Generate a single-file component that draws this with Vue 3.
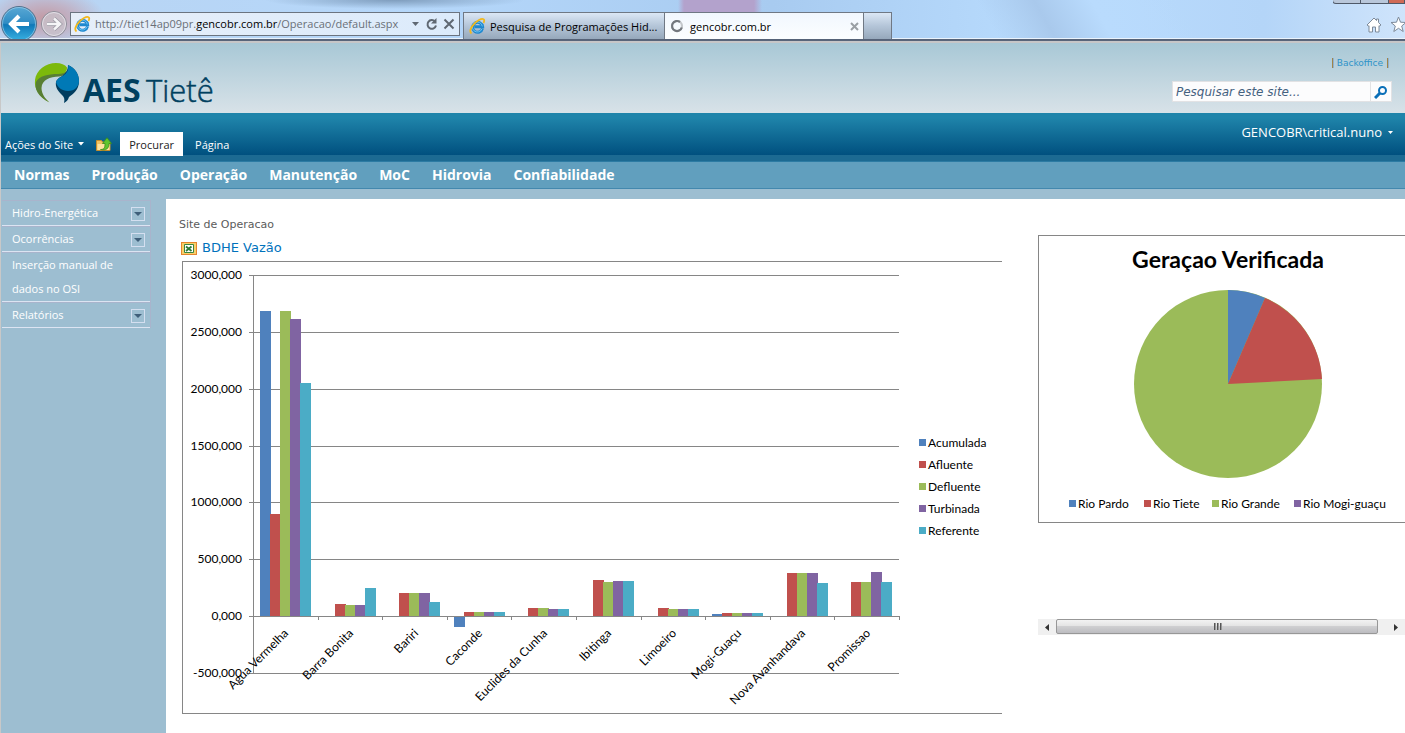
<script setup>
const colours = ['#4f81bd', '#c0504d', '#9bbb59', '#8064a2', '#4bacc6']
const series = ['Acumulada', 'Afluente', 'Defluente', 'Turbinada', 'Referente']

const plot = { left: 70, right: 716, top: 13, zero: 354, bottom: 411 }
const perUnit = (plot.zero - plot.top) / 3000
const step = (plot.right - plot.left) / 10

const plants = [
  { name: 'Agua Vermelha', values: [2685, 897, 2685, 2612, 2050] },
  { name: 'Barra Bonita', values: [0, 106, 97, 97, 246] },
  { name: 'Bariri', values: [0, 202, 202, 202, 123] },
  { name: 'Caconde', values: [-95, 35, 35, 35, 35] },
  { name: 'Euclides da Cunha', values: [0, 70, 70, 62, 62] },
  { name: 'Ibitinga', values: [0, 317, 299, 308, 308] },
  { name: 'Limoeiro', values: [0, 70, 62, 62, 62] },
  { name: 'Mogi-Guaçu', values: [18, 26, 26, 26, 26] },
  { name: 'Nova Avanhandava', values: [0, 378, 378, 378, 290] },
  { name: 'Promissao', values: [0, 299, 299, 387, 299] }
]

const gridlines = [3000, 2500, 2000, 1500, 1000, 500, 0, -500].map((v) => ({
  y: Math.round(plot.zero - v * perUnit),
  label: v === 0 ? '0,000' : `${v},000`
}))

const ticks = Array.from({ length: 11 }, (_, i) => Math.round(plot.left + step * i))

const bars = plants.flatMap((plant, i) =>
  plant.values.map((v, j) => {
    const height = Math.round(Math.abs(v) * perUnit)
    return {
      x: Math.round(plot.left + step * i + 7 + 10 * j),
      y: v < 0 ? plot.zero : plot.zero - height,
      height,
      fill: colours[j]
    }
  })
)

const labels = plants.map((plant, i) => ({
  name: plant.name,
  x: Math.round(plot.left + step * (i + 0.5) + 4),
  y: plot.zero + 18
}))

const rivers = [
  { name: 'Rio Pardo', x: 31 },
  { name: 'Rio Tiete', x: 106 },
  { name: 'Rio Grande', x: 174 },
  { name: 'Rio Mogi-guaçu', x: 256 }
]

const menu = ['Normas', 'Produção', 'Operação', 'Manutenção', 'MoC', 'Hidrovia', 'Confiabilidade']
const side = [
  { name: 'Hidro-Energética', more: true },
  { name: 'Ocorrências', more: true },
  { name: 'Inserção manual de dados no OSI', more: false },
  { name: 'Relatórios', more: true }
]
</script>

<template>
  <div class="window">
    <header class="chrome">
      <button class="back" aria-label="Voltar">
        <svg width="38" height="39" viewBox="0 0 38 39">
          <defs>
            <linearGradient id="backFill" x1="0" y1="0" x2="0" y2="1">
              <stop offset="0" stop-color="#5aa8d4" />
              <stop offset="0.48" stop-color="#2f8cc4" />
              <stop offset="0.52" stop-color="#0f78b8" />
              <stop offset="1" stop-color="#3cb4e4" />
            </linearGradient>
          </defs>
          <circle cx="19" cy="24" r="17.5" fill="url(#backFill)" stroke="#54718c" />
          <circle cx="19" cy="24" r="16.5" fill="none" stroke="#a9d3ec" stroke-opacity="0.6" />
          <path d="M29 24H12M19 16l-8 8 8 8" fill="none" stroke="#fff" stroke-width="4" />
        </svg>
      </button>
      <button class="forward" aria-label="Avançar">
        <svg width="28" height="28" viewBox="0 0 28 28">
          <circle cx="14" cy="14" r="12.5" fill="#c8c2cb" fill-opacity="0.8" stroke="#8d8d99" />
          <circle cx="14" cy="14" r="11.5" fill="none" stroke="#e2dfe6" />
          <path d="M7 14h12M14 8.500l6 5.500-6 5.500" fill="none" stroke="#9a98a3" stroke-width="4" />
          <path d="M7 14h12M14 8.500l6 5.500-6 5.500" fill="none" stroke="#f5f5f7" stroke-width="2.500" />
        </svg>
      </button>
      <div class="address">
        <svg class="ie" width="17" height="17" viewBox="0 0 17 17">
          <path d="M13.500 10.500A5 5 0 1 1 13.600 8.700H5.500" fill="none" stroke="#1e88cf" stroke-width="3" />
          <path d="M13 10.800A5 5 0 1 1 13.300 8.400" fill="none" stroke="#6cc4f2" stroke-width="1" />
          <path d="M2.500 15.500C-1 13 4 5 10 2c4-2 6.500-1 4.500 3" fill="none" stroke="#f2b81c" stroke-width="1.800" />
        </svg>
        <div class="url" role="textbox" aria-label="Endereço" contenteditable="true">http://tiet14ap09pr.<b>gencobr.com.br</b>/Operacao/default.aspx</div>
        <button aria-label="Mostrar endereços"><svg width="9" height="5" viewBox="0 0 9 5"><path d="M1 0h7L4.500 4z" fill="#5f6872" /></svg></button>
        <button aria-label="Atualizar">
          <svg width="13" height="13" viewBox="0 0 13 13">
            <path d="M10 3.500A4.300 4.300 0 1 0 11 7.500" fill="none" stroke="#5f6872" stroke-width="2" />
            <path d="M11.500 0v5.500H6z" fill="#5f6872" />
          </svg>
        </button>
        <button aria-label="Parar">
          <svg width="12" height="12" viewBox="0 0 12 12"><path d="M1.500 1.500l9 9M10.500 1.500l-9 9" stroke="#5f6872" stroke-width="2" /></svg>
        </button>
      </div>
      <div class="tabs">
        <button class="tab">
          <svg class="ie" width="17" height="17" viewBox="0 0 17 17">
            <path d="M13.500 10.500A5 5 0 1 1 13.600 8.700H5.500" fill="none" stroke="#1e88cf" stroke-width="3" />
            <path d="M13 10.800A5 5 0 1 1 13.300 8.400" fill="none" stroke="#6cc4f2" stroke-width="1" />
            <path d="M2.500 15.500C-1 13 4 5 10 2c4-2 6.500-1 4.500 3" fill="none" stroke="#f2b81c" stroke-width="1.800" />
          </svg>
          <span>Pesquisa de Programações Hid...</span>
        </button>
        <button class="tab active">
          <svg width="14" height="14" viewBox="0 0 14 14">
            <circle cx="7" cy="7" r="5" fill="none" stroke="#c4c8cc" stroke-width="2.200" />
            <path d="M8.500 2.200A5 5 0 1 1 3 4" transform="rotate(90 7 7)" fill="none" stroke="#73787e" stroke-width="2.200" />
          </svg>
          <span>gencobr.com.br</span>
          <svg class="close" width="9" height="9" viewBox="0 0 9 9"><path d="M1 1l7 7M8 1l-7 7" stroke="#9a9fa4" stroke-width="2" /></svg>
        </button>
        <button class="tab blank" aria-label="Nova guia"></button>
      </div>
      <div class="controls">
        <div class="frame"><i></i><i></i><i class="red"></i></div>
        <div class="tools">
          <button aria-label="Página inicial">
            <svg width="16" height="16" viewBox="0 0 16 16">
              <path d="M8 1L1 8l1.500 1L3 8.700V15h3.500v-5h3v5H13V8.700l.5.300L15 8l-2.500-2.500V2h-2v1.500z" fill="#fff" stroke="#7d8a99" />
            </svg>
          </button>
          <button aria-label="Favoritos">
            <svg width="17" height="17" viewBox="0 0 17 17">
              <path d="M8.500 1l2 5.200 5.500.3-4.300 3.500 1.500 5.500-4.700-3.200-4.700 3.200L5.300 10 1 6.500l5.500-.3z" fill="#fff" stroke="#7d8a99" />
            </svg>
          </button>
        </div>
      </div>
    </header>

    <div class="page">
      <div class="banner">
        <svg class="logo" width="192" height="52" viewBox="0 0 192 52">
          <path d="M15.500 41.500C5 36 0 28 1 19 2 9 12 2 22 2c5 0 9 1.500 11 4.500 0 4-2 6.500-8 7.500-10 0-19 4-18 14 0 6 4 10 8.500 13.500z" fill="#7cb90a" />
          <path d="M15.500 41.500C4 36 0 27 2 21c3-6 12-8 22-8 4 0 7-1 9-3-1 3-3 5-8 5.500-9 .5-17 3-17.500 11.500 0 6 4 11 8 14.500z" fill="#587f33" />
          <path d="M34 4c7 3 11 9 11 16 0 9-6 13-10 16-1 3-2 4.500-5 6 1-4 0-6-2-8-4-4-7-8-6-13 2-6 12-6 12-17z" fill="#003d5f" />
          <path d="M34 4c7 3 11 9 11 16 0 5-4 10-11 10-6 0-11-4-12-9 2-6 14-6 12-17z" fill="#0079b6" />
          <text x="49" y="41" class="aes">AES</text>
          <text x="112" y="41" class="tiete">Tietê</text>
        </svg>
        <div class="corner">
          <p class="backoffice"><i></i><a href="#">Backoffice</a><i></i></p>
          <form class="search" @submit.prevent>
            <input type="text" aria-label="Pesquisar este site" placeholder="Pesquisar este site..." />
            <button aria-label="Pesquisar">
              <svg width="14" height="14" viewBox="0 0 14 14">
                <circle cx="8.500" cy="5.500" r="3.500" fill="none" stroke="#0a6fb8" stroke-width="2" />
                <path d="M6 8l-5 5" stroke="#0a6fb8" stroke-width="3" />
              </svg>
            </button>
          </form>
        </div>
      </div>

      <div class="ribbon">
        <button class="actions">Ações do Site <svg width="6" height="4" viewBox="0 0 6 4"><path d="M0 0h6L3 3.500z" fill="#fff" /></svg></button>
        <button class="up" aria-label="Navegar para cima">
          <svg width="16" height="15" viewBox="0 0 16 15">
            <path d="M.5 3.500h5l1 1.500H14v8.500H.5z" fill="#f0c362" stroke="#c58d2c" />
            <path d="M1.500 7h12v6h-12z" fill="#fbe3a0" />
            <path d="M4.500 12.500c4 0 4.500-2 4.500-6H6.500L11 .7l4.500 5.800H13c0 5-3 7.500-8.500 6z" fill="#5fc52e" stroke="#3b8c1c" stroke-width="0.800" />
          </svg>
        </button>
        <button class="ribbon-tab chosen">Procurar</button>
        <button class="ribbon-tab">Página</button>
        <button class="user">GENCOBR\critical.nuno <svg width="5" height="3" viewBox="0 0 5 3"><path d="M0 0h5L2.500 3z" fill="#fff" /></svg></button>
      </div>

      <nav class="menu">
        <a v-for="item in menu" :key="item" href="#">{{ item }}</a>
      </nav>

      <div class="body">
        <aside>
          <ul>
            <li v-for="item in side" :key="item.name">
              <a href="#">{{ item.name }}</a>
              <button v-if="item.more" :aria-label="'Abrir ' + item.name">
                <svg width="8" height="4" viewBox="0 0 8 4"><path d="M0 0h8L4 4z" fill="#3f5f7a" /></svg>
              </button>
            </li>
          </ul>
        </aside>
        <main>
          <section class="flow">
            <p class="crumb">Site de Operacao</p>
            <h2>
              <svg width="16" height="13" viewBox="0 0 16 13">
                <path d="M0 0h16v13H0z" fill="#e5862d" />
                <path d="M1 1h14v11H1z" fill="#f8cf69" />
                <path d="M3.500 2.500h9v8h-9z" fill="#fff" stroke="#398541" />
                <path d="M5 4.500l5.500 4.500M10.500 4.500L5 9" stroke="#2c7a35" stroke-width="1.800" />
              </svg>
              <a href="#">BDHE Vazão</a>
            </h2>
            <div class="chart">
              <svg width="820" height="451" viewBox="0 0 820 451" role="img" aria-label="BDHE Vazão">
                <g class="lines">
                  <path v-for="g in gridlines" :key="g.y" :d="`M66 ${g.y}.5H${plot.right}`" />
                  <path :d="`M${plot.left}.5 ${plot.top}V${plot.bottom}`" />
                </g>
                <rect v-for="(b, i) in bars" :key="i" :x="b.x" :y="b.y" width="11" :height="b.height" :fill="b.fill" />
                <g class="lines">
                  <path :d="`M66 ${plot.zero}.5H${plot.right}`" />
                  <path v-for="t in ticks" :key="t" :d="`M${t}.5 ${plot.zero}v4`" />
                </g>
                <text v-for="g in gridlines" :key="g.label" class="value" x="59" :y="g.y + 4">{{ g.label }}</text>
                <text v-for="l in labels" :key="l.name" class="name" :transform="`translate(${l.x} ${l.y}) rotate(-45)`">{{ l.name }}</text>
                <g v-for="(s, i) in series" :key="s">
                  <rect x="736" :y="177 + 22 * i" width="7" height="7" :fill="colours[i]" />
                  <text x="745" :y="185 + 22 * i">{{ s }}</text>
                </g>
              </svg>
            </div>
          </section>
          <section class="output">
            <div class="pie">
              <svg width="380" height="286" viewBox="0 0 380 286" role="img" aria-label="Geraçao Verificada">
                <text x="189" y="32" class="title">Geraçao Verificada</text>
                <circle cx="189" cy="148" r="94" fill="#9bbb59" />
                <path d="M189 148V54A94 94 0 0 1 226 62z" fill="#4f81bd" />
                <path d="M189 148L226 62A94 94 0 0 1 283 143z" fill="#c0504d" />
                <g v-for="(r, i) in rivers" :key="r.name">
                  <rect :x="r.x - 1" y="264" width="7" height="7" :fill="colours[i]" />
                  <text :x="r.x + 8" y="272">{{ r.name }}</text>
                </g>
              </svg>
            </div>
            <div class="scroll">
              <button aria-label="Rolar para a esquerda"><svg width="4" height="7" viewBox="0 0 4 7"><path d="M4 0v7L0 3.500z" fill="#333" /></svg></button>
              <div class="track"><div class="thumb"><i></i><i></i><i></i></div></div>
              <button aria-label="Rolar para a direita"><svg width="4" height="7" viewBox="0 0 4 7"><path d="M0 0v7l4-3.500z" fill="#333" /></svg></button>
            </div>
          </section>
        </main>
      </div>
    </div>
  </div>
</template>

<style>
body {
  background: #9dbed1;
  overflow: hidden;
}
</style>

<style scoped>
.window {
  display: flex;
  flex-direction: column;
  min-height: 100vh;
  font-family: "Open Sans", "Noto Sans", sans-serif;
  font-size: 11px;
  color: #000;
}
button {
  display: flex;
  align-items: center;
  justify-content: center;
  padding: 0;
  border: 0;
  background: none;
  font: inherit;
  color: inherit;
}
svg { flex: none; display: block; }
a { color: inherit; text-decoration: none; }
p, h2, ul { margin: 0; padding: 0; }

.chrome {
  display: flex;
  box-sizing: border-box;
  height: 43px;
  border-bottom: 2px solid #c6c6c8;
  box-shadow: inset 0 -1px #58657a, inset 0 -2px #566378, inset 0 -3px #eaf3fc;
  background:
    radial-gradient(ellipse 130px 9px at 395px 0, #7f9dbd, transparent),
    radial-gradient(ellipse 60px 30px at 45px 18px, #c39aa4, #c0b4c8 50%, transparent),
    linear-gradient(90deg, transparent 678px, #b3a2cc 684px, #b3a2cc 754px, transparent 762px) 0 0 / 100% 12px no-repeat,
    linear-gradient(60deg, transparent 70%, #a9c9ec 74%, #b9dbfd 78%, transparent 84%),
    linear-gradient(90deg, #b9d4f2, #b5d7fa 30%, #a8cbf0 55%, #b9dcfe 75%, #b4d5f8 90%, #cfe4fb);
}
.back { width: 38px; height: 39px; }
.forward { width: 28px; height: 28px; margin: 10px 4px 0 2px; }
.address {
  display: flex;
  align-items: center;
  box-sizing: border-box;
  width: 390px;
  height: 24px;
  margin: 12px 3px 0 -2px;
  padding: 0 4px 0 3px;
  border: 1px solid #6b7480;
  background: linear-gradient(90deg, #e6eef9, #dcebfb);
}
.url {
  flex: 1;
  overflow: hidden;
  margin: 0 2px 0 4px;
  color: #6a7078;
  white-space: nowrap;
  line-height: 18px;
}
.url b { font-weight: 400; color: #000; }
.address button { margin-left: 5px; }
.tabs { display: flex; align-items: flex-start; }
.tab {
  box-sizing: border-box;
  height: 27px;
  margin: 12px 0 0 -1px;
  padding: 0 4px 0 5px;
  gap: 4px;
  justify-content: flex-start;
  width: 202px;
  border: 1px solid #6f7884;
  border-bottom: 0;
  background: linear-gradient(#dbe7f5, #b4c5d8 50%, #96a8bb);
  white-space: nowrap;
}
.tab:first-child { margin-left: 0; }
.tab.active { width: 200px; padding-left: 5px; gap: 6px; background: linear-gradient(#f1f7fe, #fcfeff); }
.tab.blank { width: 29px; }
.close { margin-left: auto; }
.controls { display: flex; flex-direction: column; align-items: flex-end; margin-left: auto; overflow: hidden; }
.frame { display: flex; height: 3px; }
.frame i {
  box-sizing: border-box;
  width: 29px;
  height: 4px;
  margin-left: -1px;
  border: 1px solid #4f5968;
  border-top: 0;
  background: #b9c7da;
}
.frame i:first-child { border-radius: 0 0 0 4px; }
.frame .red { width: 17px; background: #d06a56; }
.tools { display: flex; gap: 8px; margin: 13px -2px 0 0; }

.page {
  display: flex;
  flex: 1;
  flex-direction: column;
  border-left: 1px solid #c8c8c8;
  background: #9dbed1;
}
.banner {
  display: flex;
  justify-content: space-between;
  box-sizing: border-box;
  height: 70px;
  background: linear-gradient(#a8c8d6, #d8e2e8);
}
.logo { margin: 18px 0 0 33px; overflow: visible; }
.aes { font: 700 32px "Open Sans", sans-serif; fill: #00405f; }
.tiete { font: 300 31px "Open Sans", sans-serif; fill: #00405f; stroke: #00405f; stroke-width: 0.5; }
.corner { display: flex; flex-direction: column; align-items: flex-end; padding: 13px 13px 0 0; }
.backoffice { display: flex; align-items: center; gap: 4px; margin-right: 4px; height: 14px; font: 9px/14px "DejaVu Sans", sans-serif; color: #2f93c9; }
.backoffice i { width: 1px; height: 10px; background: #a08448; box-shadow: 1px 0 #8fb0d0; }
.search { display: flex; box-sizing: border-box; width: 220px; height: 21px; margin-top: 11px; border: 1px solid #e2e2e4; background: #fcfcfd; }
.search input {
  flex: 1;
  min-width: 0;
  padding: 0 0 0 3px;
  border: 0;
  background: none;
  font: italic 12px "DejaVu Sans", sans-serif;
  color: #44617f;
  outline: 0;
}
.search input::placeholder { color: #44617f; opacity: 1; }
.search button { width: 21px; border-left: 1px solid #e2e2e4; }

.ribbon {
  display: flex;
  align-items: flex-end;
  box-sizing: border-box;
  height: 49px;
  padding-bottom: 5px;
  border-bottom: 1px solid #2c7ba3;
  background: linear-gradient(#1f84aa 10%, #00507f 42px, #1c6a92 42px);
  color: #fff;
}
.actions { height: 24px; margin-left: 4px; gap: 5px; }
.up { height: 24px; margin: 0 8px 0 12px; }
.ribbon-tab { height: 24px; padding: 0 9px; }
.chosen { background: #fff; color: #222; margin-right: 3px; }
.user { gap: 6px; height: 22px; margin: 0 12px 13px auto; font-size: 13px; }

.menu {
  display: flex;
  gap: 22px;
  box-sizing: border-box;
  height: 27px;
  padding-left: 13px;
  border-bottom: 1px solid #4388ae;
  background: #619fbe;
  font-size: 14px;
  font-weight: 700;
  line-height: 26px;
  color: #fff;
}

.body { display: flex; flex: 1; }
aside { flex: none; width: 165px; padding-top: 11px; box-sizing: border-box; }
aside ul { width: 149px; border-top: 1px solid #a9b4cc; border-right: 1px solid #a9b4cc; list-style: none; margin-left: 1px; box-sizing: border-box; }
aside li {
  display: flex;
  align-items: flex-start;
  justify-content: space-between;
  padding: 0 5px 0 10px;
  border-bottom: 1px solid #dce4f2;
  color: #fff;
  line-height: 24px;
}
aside li + li { border-top: 1px solid #a9b4cc; }
aside a { max-width: 112px; }
aside button { box-sizing: border-box; width: 14px; height: 14px; margin-top: 6px; border: 1px solid #d4dff0; }

main { display: flex; flex: 1; min-width: 0; margin-top: 10px; background: #fff; }
.flow { flex: 1; min-width: 0; padding: 18px 36px 19px 13px; }
.crumb { font: 11px/16px "DejaVu Sans", sans-serif; color: #5b5b5b; }
h2 { display: flex; align-items: center; gap: 5px; margin: 6px 0 4px 2px; font: 13px/18px "DejaVu Sans", sans-serif; color: #0072bc; }
.chart {
  overflow: hidden;
  margin-left: 3px;
  border: 1px solid #868686;
  border-right: 0;
}
.chart text, .pie text { font-family: Lato, sans-serif; font-size: 12px; fill: #000; }
.lines { fill: none; stroke: #868686; }
.value, .name { text-anchor: end; }
.output { flex: none; width: 367px; min-width: 0; padding-top: 36px; }
.pie { overflow: hidden; border: 1px solid #868686; border-right: 0; }
.pie .title { font-size: 23px; font-weight: 700; text-anchor: middle; }
.scroll { display: flex; height: 16px; margin-top: 96px; background: #f0f0f0; }
.scroll button { width: 18px; }
.track { flex: 1; padding-right: 9px; }
.thumb {
  display: flex;
  align-items: center;
  justify-content: center;
  gap: 2px;
  box-sizing: border-box;
  height: 15px;
  border: 1px solid #979797;
  border-radius: 2px;
  background: linear-gradient(#f3f3f3, #e4e4e4 45%, #cfcfd1 50%, #bcbcc0);
}
.thumb i { width: 1px; height: 7px; background: #555; box-shadow: 1px 0 #999; }
</style>
